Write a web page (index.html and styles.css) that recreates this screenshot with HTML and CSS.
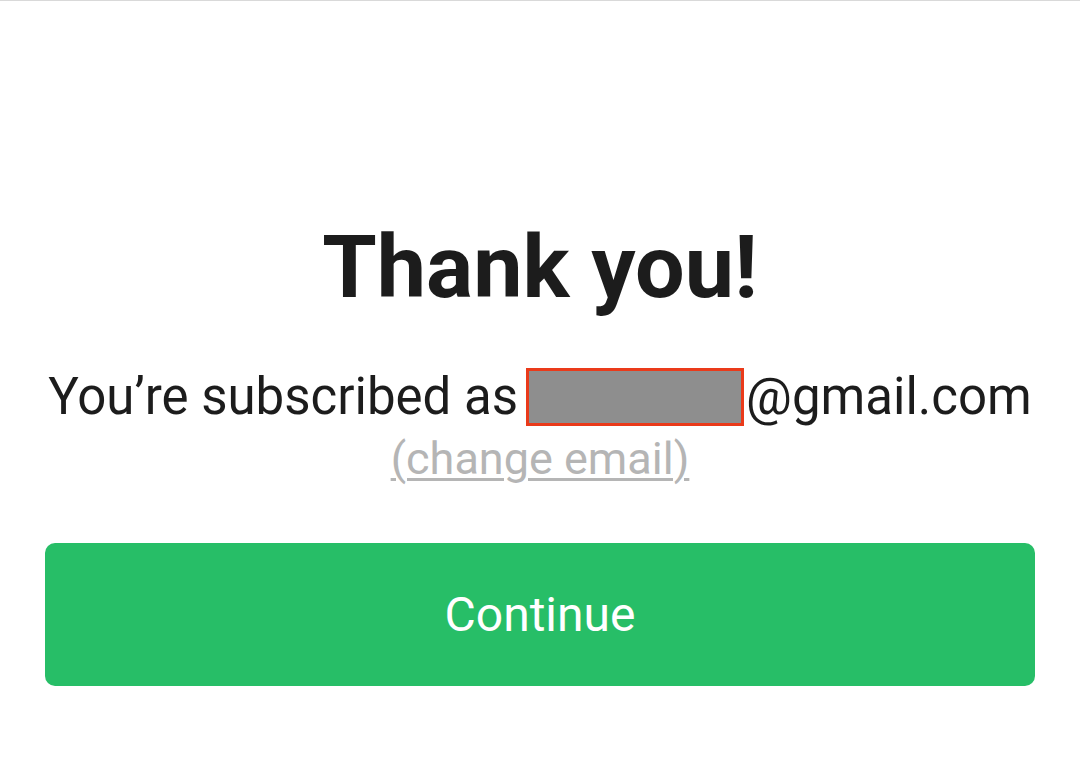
FILE: index.html
```html
<!DOCTYPE html>
<html>
<head>
<meta charset="utf-8">
<link rel="stylesheet" href="styles.css">
</head>
<body>
<div class="page">
  <h1 class="title">Thank you!</h1>
  <p class="subscribed">You’re subscribed as <span class="redact"></span>@gmail.com</p>
  <a class="change" href="#">(change email)</a>
  <button class="continue">Continue</button>
</div>
</body>
</html>
```
FILE: styles.css
```css
html, body {
  margin: 0;
  padding: 0;
  background: #ffffff;
}
body {
  border-top: 1px solid #d9d9d9;
  font-family: Roboto, "Liberation Sans", sans-serif;
}
.page {
  display: flex;
  flex-direction: column;
  align-items: center;
  padding: 211px 45px 0 45px;
}
.title {
  margin: 0;
  font-size: 88px;
  font-weight: 700;
  color: #1c1c1c;
  line-height: 110px;
}
.subscribed {
  margin: 42px 0 0 0;
  font-size: 51px;
  line-height: 66px;
  color: #1c1c1c;
  display: flex;
  align-items: center;
  white-space: nowrap;
}
.redact {
  display: inline-block;
  width: 212px;
  height: 52px;
  background: #8e8e8e;
  border: 3px solid #ea3a1a;
  margin: 0 2px 0 8px;
}
.change {
  font-size: 45px;
  line-height: 54px;
  color: #b5b5b5;
  text-decoration: underline;
  text-decoration-thickness: 3px;
  text-underline-offset: 4px;
  margin-top: 2px;
}
.continue {
  margin-top: 57px;
  width: 100%;
  height: 143px;
  border: none;
  border-radius: 10px;
  background: #27be67;
  color: #ffffff;
  font-family: Roboto, "Liberation Sans", sans-serif;
  font-size: 48px;
}
```
